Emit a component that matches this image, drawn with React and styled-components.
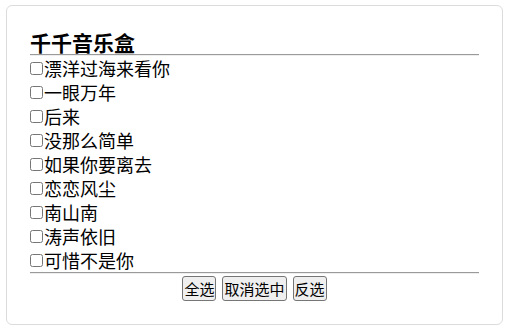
import React, { useState } from 'react'
import styled, { createGlobalStyle } from 'styled-components'

const GlobalStyle = createGlobalStyle`
body {
    margin: 0;
    background: #fff;
    font-family: "Noto Sans CJK SC", "Noto Sans", sans-serif;
    color: #000;
}
`

const Card = styled.div`
margin: 5px 6px;
padding: 24px 23px 23px;
border: 1px solid #dcdcdc;
border-radius: 6px;
`

const Title = styled.h3`
margin: 0;
font-size: 21px;
font-weight: 700;
line-height: 24px;
`

const Rule = styled.hr`
margin: 0;
height: 0;
border: none;
border-top: 1px solid #9a9a9a;
border-bottom: 1px solid #eeeeee;
`

const List = styled.div`
display: flex;
flex-direction: column;
`

const Row = styled.label`
display: flex;
align-items: center;
height: 24px;
font-size: 18px;
line-height: 24px;
`

const Check = styled.input`
width: 13px;
height: 13px;
margin: 0 1px 0 0;
`

const Bar = styled.div`
display: flex;
justify-content: center;
gap: 6px;
margin-top: 2px;
`

const Button = styled.button`
height: 25px;
padding: 0 1px;
font-family: "Noto Sans CJK SC", sans-serif;
font-size: 15px;
line-height: 23px;
color: #000;
background: #efefef;
border: 1px solid #767676;
border-radius: 3px;
`

const songs = [
    '漂洋过海来看你',
    '一眼万年',
    '后来',
    '没那么简单',
    '如果你要离去',
    '恋恋风尘',
    '南山南',
    '涛声依旧',
    '可惜不是你',
]

const App = () => {
    const [checked, setChecked] = useState(songs.map(() => false))

    const toggle = (i) => setChecked(checked.map((c, j) => (j === i ? !c : c)))

    return (
        <>
            <GlobalStyle />
            <Card>
                <Title>千千音乐盒</Title>
                <Rule />
                <List>
                    {songs.map((s, i) => (
                        <Row key={s}>
                            <Check type="checkbox" checked={checked[i]} onChange={() => toggle(i)} />
                            {s}
                        </Row>
                    ))}
                </List>
                <Rule />
                <Bar>
                    <Button onClick={() => setChecked(songs.map(() => true))}>全选</Button>
                    <Button onClick={() => setChecked(songs.map(() => false))}>取消选中</Button>
                    <Button onClick={() => setChecked(checked.map((c) => !c))}>反选</Button>
                </Bar>
            </Card>
        </>
    )
}

export default App
